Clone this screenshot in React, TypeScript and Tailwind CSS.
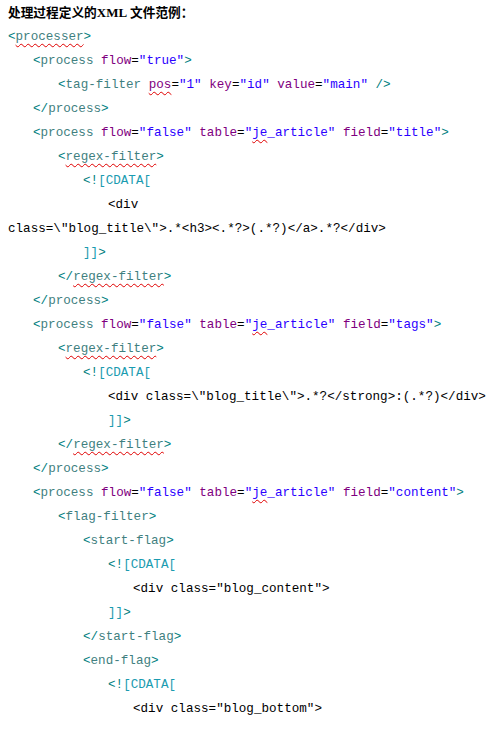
import React from 'react';

type Tok = [string, string, boolean?];

const color: Record<string, string> = {
  b: 'text-[#008080]',
  t: 'text-[#3f7f7f]',
  a: 'text-[#7f007f]',
  e: 'text-black',
  v: 'text-[#2a00ff]',
  c: 'text-[#1a9bb0]',
  x: 'text-black',
};

const indent = ['pl-[8px]', 'pl-[33px]', 'pl-[58px]', 'pl-[83px]', 'pl-[108px]', 'pl-[133px]'];

const open = (name: string, sq = false): Tok[] => [['b', '<'], ['t', name, sq]];
const attr = (k: string, v: string, ksq = false): Tok[] => [['x', ' '], ['a', k, ksq], ['e', '='], ['v', `"${v}"`]];
const jeAttr: Tok[] = [['x', ' '], ['a', 'table'], ['e', '='], ['v', '"'], ['v', 'je', true], ['v', '_article"']];
const close = (name: string, sq = false): Tok[] => [['b', '</'], ['t', name, sq], ['b', '>']];
const cdataOpen: Tok[] = [['b', '<!'], ['c', '[CDATA[']];
const cdataClose: Tok[] = [['c', ']]'], ['b', '>']];

const lines: [number, Tok[]][] = [
  [0, [...open('processer', true), ['b', '>']]],
  [1, [...open('process'), ...attr('flow', 'true'), ['b', '>']]],
  [2, [...open('tag-filter'), ...attr('pos', '1', true), ...attr('key', 'id'), ...attr('value', 'main'), ['b', ' />']]],
  [1, close('process')],
  [1, [...open('process'), ...attr('flow', 'false'), ...jeAttr, ...attr('field', 'title'), ['b', '>']]],
  [2, [...open('regex-filter', true), ['b', '>']]],
  [3, cdataOpen],
  [4, [['x', '<div']]],
  [0, [['x', 'class=\\"blog_title\\">.*<h3><.*?>(.*?)</a>.*?</div>']]],
  [3, cdataClose],
  [2, close('regex-filter', true)],
  [1, close('process')],
  [1, [...open('process'), ...attr('flow', 'false'), ...jeAttr, ...attr('field', 'tags'), ['b', '>']]],
  [2, [...open('regex-filter', true), ['b', '>']]],
  [3, cdataOpen],
  [4, [['x', '<div class=\\"blog_title\\">.*?</strong>:(.*?)</div>']]],
  [4, cdataClose],
  [2, close('regex-filter', true)],
  [1, close('process')],
  [1, [...open('process'), ...attr('flow', 'false'), ...jeAttr, ...attr('field', 'content'), ['b', '>']]],
  [2, [...open('flag-filter'), ['b', '>']]],
  [3, [...open('start-flag'), ['b', '>']]],
  [4, cdataOpen],
  [5, [['x', '<div class="blog_content">']]],
  [4, cdataClose],
  [3, close('start-flag')],
  [3, [...open('end-flag'), ['b', '>']]],
  [4, cdataOpen],
  [5, [['x', '<div class="blog_bottom">']]],
];

export default function App() {
  return (
    <div className="w-[500px] min-h-[729px] bg-white">
      <div className="h-[25px] pl-[8px] leading-[23px] text-[12.7px] font-bold text-black whitespace-pre [font-family:'Noto_Sans_CJK_SC',sans-serif]">
        处理过程定义的<span className="[font-family:'Liberation_Serif',serif] text-[13px]">XML</span> 文件范例：
      </div>
      <div className="text-[12.6px] leading-[24px] [font-family:'Liberation_Mono','Courier_New',monospace]">
        {lines.map(([lvl, toks], i) => (
          <div key={i} className={`h-[24px] whitespace-pre ${indent[lvl]}`}>
            {toks.map(([k, s, sq], j) => (
              <span
                key={j}
                className={`${color[k]} ${sq ? 'underline decoration-wavy decoration-[#e00000] decoration-1 underline-offset-[3px]' : ''}`}
              >
                {s}
              </span>
            ))}
          </div>
        ))}
      </div>
    </div>
  );
}
